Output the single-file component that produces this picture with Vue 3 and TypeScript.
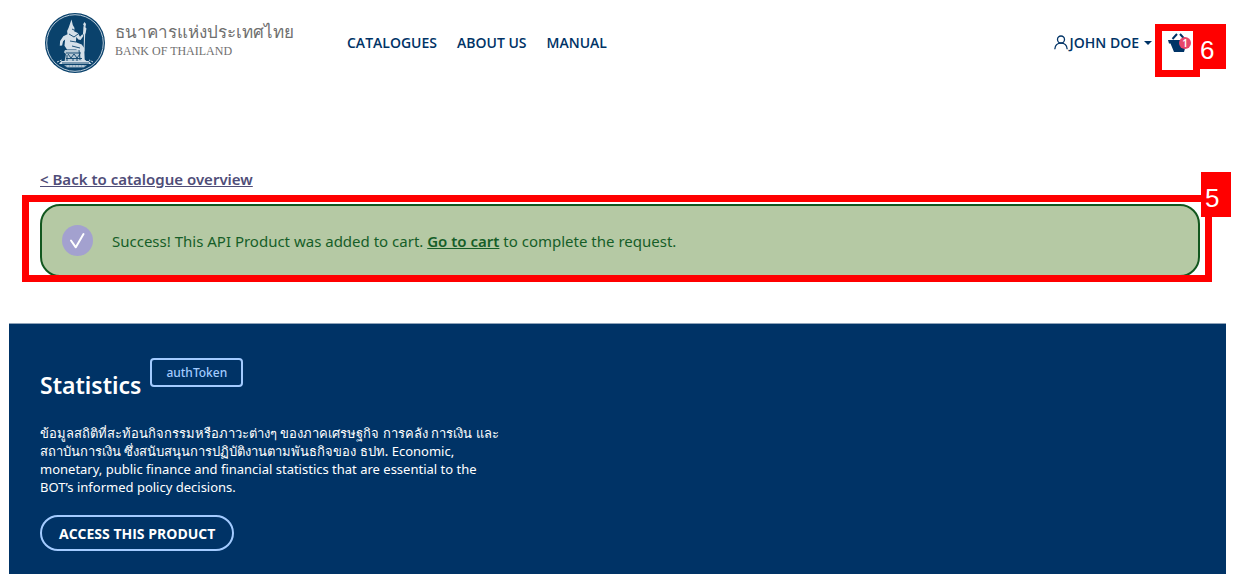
<script setup lang="ts">
interface NavLink {
  label: string
  href: string
}

const links: NavLink[] = [
  { label: 'CATALOGUES', href: '#catalogues' },
  { label: 'ABOUT US', href: '#about' },
  { label: 'MANUAL', href: '#manual' },
]

const cartCount = 1
</script>

<template>
  <div class="page">
    <header class="header">
      <a class="brand" href="#home">
        <svg class="emblem" viewBox="0 0 60 60" aria-hidden="true">
          <circle cx="30" cy="30" r="30" fill="#0a426c" />
          <circle cx="30" cy="30" r="28.3" fill="none" stroke="#b9cbd9" stroke-width="1" />
          <g fill="#d5e0e9">
            <path d="M26.500 6.500l1.300 5.500 1.700 3-.4 3.300 3.700 1.700 2.200 3.700 2.300-2.500 1.300 1.500-3 4.400-2.300-.6-2-2.500-.4 5.300 5.800 2.100 2.500 3.600.5 11.500 2.800 2.400-5.700.4-1.400-10.500-4.400-2.200-9-.2-2.500-3.700.6-6.200-2 1.800-1 4.200-2.300.3.300-4.700 3.200-4.800 4.200-2-.4-3.300 1.500-3.300z" />
            <path d="M39.500 9l1.500 2-.5 2.500-1 25-.9-.1.600-25-1.100-2.200z" />
            <path d="M38.500 13l3 2.500-1 5-2.600 1.400z" />
            <path d="M20 37h17l1.500 2-1.300 1.600 1.200 8H19.500l1.400-7.500-2-1.800z" opacity=".85" />
            <path d="M16.500 48h27l3 3H14z" />
            <path d="M19 52h23l-3 2.400H22z" opacity=".65" />
          </g>
          <g fill="none" stroke="#0a426c" stroke-width=".9">
            <path d="M21 40h15M21 45.500h16M23 41l3 4 3-4 3 4 3-4M24 21l5 3 4-3M25 28l6 1M27 33l8 2M17 50h27M27 16l2 1M34 37l1 10M22 42v6M28 45v3M32 45v3" />
          </g>
          <path d="M12 49l5-2M48 49l-4-2M22 53h17" fill="none" stroke="#d5e0e9" stroke-width="1" stroke-dasharray="2 1" />
        </svg>
        <span class="brand-text">
          <span class="brand-th" lang="th">ธนาคารแห่งประเทศไทย</span>
          <span class="brand-en">BANK OF THAILAND</span>
        </span>
      </a>
      <nav class="nav" aria-label="Main">
        <a v-for="link in links" :key="link.label" :href="link.href">{{ link.label }}</a>
      </nav>
      <button class="user" type="button">
        <svg class="user-icon" viewBox="0 0 14 15" aria-hidden="true">
          <g fill="none" stroke="#003366" stroke-width="1.300">
            <circle cx="7" cy="4.500" r="3.500" />
            <path d="M.8 14.200C1.100 10.500 3.500 8.200 7 8.200s5.900 2.300 6.200 6" />
          </g>
        </svg>
        <span>JOHN DOE</span>
        <span class="caret"></span>
      </button>
      <div class="cart-wrap">
        <a class="cart" href="#cart" aria-label="Cart">
          <svg class="basket" viewBox="0 0 24 20" aria-hidden="true">
            <path d="M1 7h20v3h-1.500L17 19H7L3.500 10.500H2z" fill="#003366" />
            <path d="M5.500 6L10 1M17.500 6L13 1" fill="none" stroke="#003366" stroke-width="2" />
          </svg>
          <span class="count">{{ cartCount }}</span>
        </a>
        <span class="frame frame-cart"></span>
        <span class="marker marker-cart">6</span>
      </div>
    </header>

    <main>
      <section class="notice">
        <a class="back" href="#overview">&lt; Back to catalogue overview</a>
        <div class="alert-wrap">
          <div class="alert" role="status">
            <svg class="check" viewBox="0 0 31 31" aria-hidden="true">
              <circle cx="15.500" cy="15.500" r="15.500" fill="#a3a1cf" />
              <path d="M9 15.500l4.800 6.800L21.500 9" fill="none" stroke="#fff" stroke-width="2" stroke-linecap="round" stroke-linejoin="round" />
            </svg>
            <p>Success! This API Product was added to cart. <a href="#cart">Go to cart</a> to complete the request.</p>
          </div>
          <span class="frame frame-alert"></span>
          <span class="marker marker-alert">5</span>
        </div>
      </section>

      <section class="product">
        <div class="title-row">
          <h1>Statistics</h1>
          <span class="tag">authToken</span>
        </div>
        <p class="description">
          <span class="thai" lang="th">ข้อมูลสถิติที่สะท้อนกิจกรรมหรือภาวะต่างๆ ของภาคเศรษฐกิจ การคลัง การเงิน และ</span><br />
          <span class="thai" lang="th">สถาบันการเงิน ซึ่งสนับสนุนการปฏิบัติงานตามพันธกิจของ ธปท.</span>
          Economic, monetary, public finance and financial statistics that are essential to the BOT’s informed policy decisions.
        </p>
        <button class="access" type="button">ACCESS THIS PRODUCT</button>
      </section>
    </main>
  </div>
</template>

<style>
body {
  background: #fff;
}
</style>

<style scoped>
.page {
  box-sizing: border-box;
  padding: 0 12px 7px 9px;
  font-family: "Noto Sans", "Open Sans", sans-serif;
  color: #003366;
}

.header {
  display: flex;
  align-items: center;
  height: 85px;
  padding: 0 35px 0 36px;
}

a {
  color: inherit;
}

.brand {
  display: flex;
  align-items: center;
  gap: 10px;
  text-decoration: none;
  color: #6f6f6f;
}

.emblem {
  width: 60px;
  height: 60px;
}

.brand-text {
  display: flex;
  flex-direction: column;
  width: 184px;
  padding-bottom: 8px;
}

.brand-th {
  font-size: 17px;
  font-weight: 500;
  line-height: 24px;
  white-space: nowrap;
}

.brand-en {
  font-family: "Liberation Serif", serif;
  font-size: 12px;
  line-height: 14px;
}

.nav {
  display: flex;
  gap: 20px;
  margin-left: 48px;
}

.nav,
.user,
.access {
  font-family: "Open Sans", "Noto Sans", sans-serif;
}

.nav,
.user {
  font-size: 14px;
  font-weight: 600;
  line-height: 20px;
}

.nav a {
  text-decoration: none;
}

button {
  color: inherit;
  background: none;
}

.user {
  display: flex;
  align-items: center;
  gap: 2px;
  margin-left: auto;
  padding: 0;
  border: 0;
}

.user-icon {
  width: 14px;
  height: 15px;
}

.caret {
  margin-left: 3px;
  border: 4px solid transparent;
  border-top-color: #003366;
  border-bottom: 0;
}

.cart-wrap {
  position: relative;
  margin-left: 15px;
}

.cart {
  display: block;
  height: 20px;
}

.basket {
  display: block;
  width: 24px;
  height: 20px;
}

.count {
  position: absolute;
  top: 4px;
  right: 0;
  width: 12px;
  height: 12px;
  border-radius: 50%;
  background: #e6466a;
  color: #fff;
  font-size: 10px;
  font-weight: 600;
  line-height: 12px;
  text-align: center;
}

.frame {
  position: absolute;
  box-sizing: border-box;
  border: 7px solid #f00;
  pointer-events: none;
}

.frame-cart {
  inset: -9px -9px -24px -12px;
}

.marker {
  position: absolute;
  box-sizing: border-box;
  width: 30px;
  height: 45px;
  padding-left: 4px;
  background: #f00;
  color: #fff;
  font-family: "Liberation Sans", sans-serif;
  font-size: 26px;
  line-height: 52px;
}

.marker-cart {
  top: -9px;
  right: -35px;
}

.notice {
  padding: 82px 26px 46px 31px;
}

.back {
  display: inline-block;
  color: #4f4d78;
  font-size: 15px;
  font-weight: 600;
  line-height: 24px;
  margin-bottom: 13px;
}

.alert-wrap {
  position: relative;
}

.alert {
  display: flex;
  align-items: center;
  gap: 19px;
  box-sizing: border-box;
  min-height: 73px;
  padding: 0 20px;
  border: 2px solid #12571f;
  border-radius: 20px;
  background: #b5c9a4;
  color: #155e28;
  font-size: 15px;
  line-height: 24px;
}

.alert p {
  margin: 0;
}

.alert a {
  font-weight: 600;
}

.check {
  flex: none;
  width: 31px;
  height: 31px;
}

.frame-alert {
  inset: -9px -12px -5px -18px;
}

.marker-alert {
  top: -32px;
  right: -31px;
}

.product {
  padding: 34px 31px 23px;
  border-top: 1px solid #8fa3b9;
  background: #003366;
  color: #fff;
}

.title-row {
  display: flex;
  align-items: flex-start;
  gap: 9px;
}

h1 {
  margin: 12px 0 0;
  font-size: 23px;
  font-weight: 600;
  line-height: 30px;
}

.tag {
  box-sizing: border-box;
  padding: 0 14px;
  border: 2px solid #a3cbff;
  border-radius: 4px;
  color: #a3cbff;
  font-size: 12px;
  font-weight: 500;
  line-height: 25px;
}

.description {
  max-width: 460px;
  margin: 24px 0 19px;
  font-size: 13px;
  line-height: 18px;
}

.thai {
  font-weight: 500;
  white-space: nowrap;
}

.access {
  display: block;
  height: 36px;
  padding: 0 17px;
  border: 2px solid #a3cbff;
  border-radius: 18px;
  font-size: 14px;
  font-weight: 700;
}
</style>
